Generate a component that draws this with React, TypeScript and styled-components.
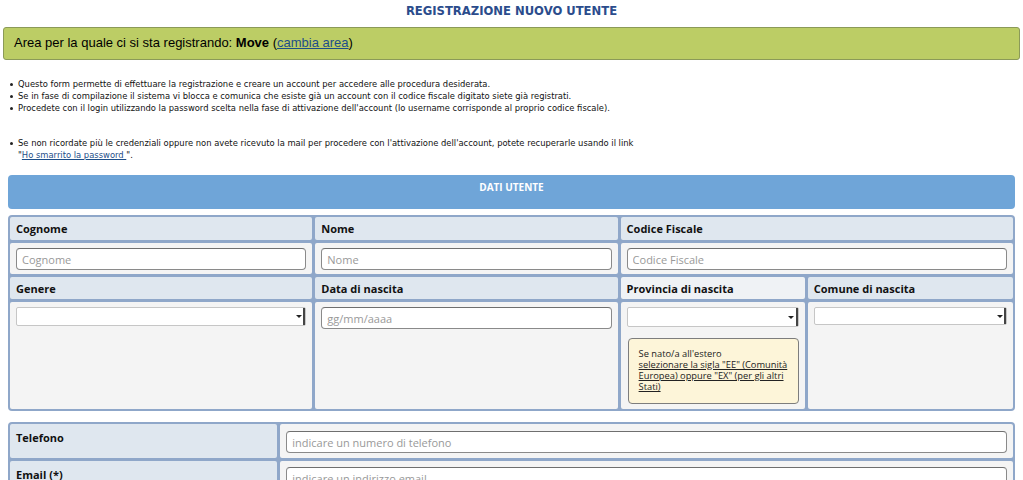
import React from "react";
import styled, { createGlobalStyle } from "styled-components";

const GlobalStyle = createGlobalStyle`
  html, body {
    margin: 0;
    padding: 0;
    background: #ffffff;
  }
  body {
    font-family: "Open Sans", "DejaVu Sans", sans-serif;
    color: #000;
  }
`;

const Page = styled.div`
  width: 1023px;
  padding-top: 4px;
`;

const Title = styled.h1`
  margin: 0 0 8px;
  text-align: center;
  font-family: "DejaVu Sans", Verdana, sans-serif;
  font-size: 11.6px;
  line-height: 15px;
  font-weight: bold;
  color: #2b4c8c;
`;

const AreaBox = styled.div`
  margin: 0 3px;
  padding: 7px 10px 8px;
  background: #bccd65;
  border: 1px solid #8b9a58;
  border-radius: 3px;
  font-family: "Liberation Sans", Arial, sans-serif;
  font-size: 13px;
  line-height: 16px;
`;

const AreaLink = styled.a`
  color: #1d4e89;
  text-decoration: underline;
`;

const Notes = styled.ul`
  margin: 18px 0 14px;
  padding: 0 0 0 10px;
  list-style: none;
  font-family: "DejaVu Sans", Verdana, sans-serif;
  font-size: 8.4px;
  line-height: 12px;
  color: #111;
`;

const NoteItem = styled.li<{ $gap?: boolean }>`
  position: relative;
  padding-left: 8px;
  margin-top: ${(p) => (p.$gap ? "23px" : "0")};

  &::before {
    content: "";
    position: absolute;
    left: 0;
    top: 5px;
    width: 3px;
    height: 3px;
    border-radius: 50%;
    background: #222;
  }
`;

const NoteLink = styled.a`
  color: #1d4e89;
  text-decoration: underline;
`;

const Section = styled.div`
  margin: 0 8px;
`;

const SectionHeader = styled.div`
  height: 34px;
  box-sizing: border-box;
  padding-top: 6px;
  background: #6fa5d8;
  border-radius: 4px;
  color: #fff;
  text-align: center;
  font-weight: 700;
  font-size: 10px;
  line-height: 12px;
`;

const Grid = styled.div<{ $cols: string; $rows: string; $space: number }>`
  display: grid;
  grid-template-columns: ${(p) => p.$cols};
  grid-template-rows: ${(p) => p.$rows};
  gap: 3px;
  padding: 2px;
  margin-top: ${(p) => p.$space}px;
  background: #8fa7c9;
  border-radius: 4px;
`;

const LabelCell = styled.div<{ $light?: boolean; $span?: number; $top?: boolean }>`
  grid-column: span ${(p) => p.$span ?? 1};
  display: flex;
  align-items: ${(p) => (p.$top ? "flex-start" : "center")};
  padding: ${(p) => (p.$top ? "6px 6px 0" : "0 6px")};
  background: ${(p) => (p.$light ? "#eff2f5" : "#dfe7ef")};
  border-radius: 2px;
  font-weight: 700;
  font-size: 11px;
  color: #111;
`;

const FieldCell = styled.div<{ $span?: number; $pad?: number }>`
  grid-column: span ${(p) => p.$span ?? 1};
  display: flex;
  flex-direction: column;
  align-items: stretch;
  padding: ${(p) => p.$pad ?? 5}px 6px 0;
  background: #f4f4f4;
  border-radius: 2px;
`;

const TextInput = styled.input`
  height: 22px;
  box-sizing: border-box;
  width: 100%;
  padding: 0 5px;
  background: #fff;
  border: 1px solid #8a8a8a;
  border-top-color: #6f6f6f;
  border-radius: 4px;
  font-family: "Open Sans", sans-serif;
  font-size: 11px;
  color: #333;
  outline: none;

  &::placeholder {
    color: #999;
  }
`;

const SelectBox = styled.div<{ $height?: number }>`
  position: relative;
  height: ${(p) => p.$height ?? 19}px;
  box-sizing: border-box;
  background: #fff;
  border: 1px solid #c6c6c6;
  border-radius: 2px;
`;

const SelectArrow = styled.span`
  position: absolute;
  right: 0;
  top: 0;
  bottom: 0;
  width: 9px;
  border-right: 2px solid #444;
  display: flex;
  align-items: center;
  justify-content: center;

  &::after {
    content: "";
    border-left: 3px solid transparent;
    border-right: 3px solid transparent;
    border-top: 3px solid #222;
  }
`;

const Hint = styled.div`
  margin: 11px 0 0 1px;
  padding: 9px 7px 11px 10px;
  background: #fdf5d9;
  border: 1px solid #7d7d7d;
  border-radius: 4px;
  font-size: 9.3px;
  line-height: 11px;
  color: #222;
`;

const HintLink = styled.span`
  text-decoration: underline;
`;

const Select = ({ height }: { height?: number }) => (
  <SelectBox $height={height}>
    <SelectArrow />
  </SelectBox>
);

export default function App() {
  return (
    <Page>
      <GlobalStyle />
      <Title>REGISTRAZIONE NUOVO UTENTE</Title>
      <AreaBox>
        Area per la quale ci si sta registrando: <b>Move</b> (
        <AreaLink href="#">cambia area</AreaLink>)
      </AreaBox>

      <Notes>
        <NoteItem>
          Questo form permette di effettuare la registrazione e creare un account per accedere
          alle procedura desiderata.
        </NoteItem>
        <NoteItem>
          Se in fase di compilazione il sistema vi blocca e comunica che esiste già un account con
          il codice fiscale digitato siete già registrati.
        </NoteItem>
        <NoteItem>
          Procedete con il login utilizzando la password scelta nella fase di attivazione
          dell'account (lo username corrisponde al proprio codice fiscale).
        </NoteItem>
        <NoteItem $gap>
          Se non ricordate più le credenziali oppure non avete ricevuto la mail per procedere con
          l'attivazione dell'account, potete recuperarle usando il link
          <br />"<NoteLink href="#">Ho smarrito la password </NoteLink>".
        </NoteItem>
      </Notes>

      <Section>
        <SectionHeader>DATI UTENTE</SectionHeader>
        <Grid
          $space={6}
          $cols="minmax(0,302fr) minmax(0,302fr) minmax(0,184fr) minmax(0,205fr)"
          $rows="23px 31px 22px 107px"
        >
          <LabelCell>Cognome</LabelCell>
          <LabelCell>Nome</LabelCell>
          <LabelCell $span={2}>Codice Fiscale</LabelCell>

          <FieldCell>
            <TextInput placeholder="Cognome" />
          </FieldCell>
          <FieldCell>
            <TextInput placeholder="Nome" />
          </FieldCell>
          <FieldCell $span={2}>
            <TextInput placeholder="Codice Fiscale" />
          </FieldCell>

          <LabelCell>Genere</LabelCell>
          <LabelCell>Data di nascita</LabelCell>
          <LabelCell $light>Provincia di nascita</LabelCell>
          <LabelCell>Comune di nascita</LabelCell>

          <FieldCell>
            <Select />
          </FieldCell>
          <FieldCell>
            <TextInput placeholder="gg/mm/aaaa" />
          </FieldCell>
          <FieldCell>
            <Select height={20} />
            <Hint>
              Se nato/a all'estero
              <br />
              <HintLink>
                selezionare la sigla "EE" (Comunità Europea) oppure "EX" (per gli altri Stati)
              </HintLink>
            </Hint>
          </FieldCell>
          <FieldCell>
            <Select height={18} />
          </FieldCell>
        </Grid>

        <Grid $space={11} $cols="minmax(0,267fr) minmax(0,732fr)" $rows="34px 34px">
          <LabelCell $top>Telefono</LabelCell>
          <FieldCell $pad={7}>
            <TextInput placeholder="indicare un numero di telefono" />
          </FieldCell>
          <LabelCell $top>Email (*)</LabelCell>
          <FieldCell $pad={6}>
            <TextInput placeholder="indicare un indirizzo email" />
          </FieldCell>
        </Grid>
      </Section>
    </Page>
  );
}
